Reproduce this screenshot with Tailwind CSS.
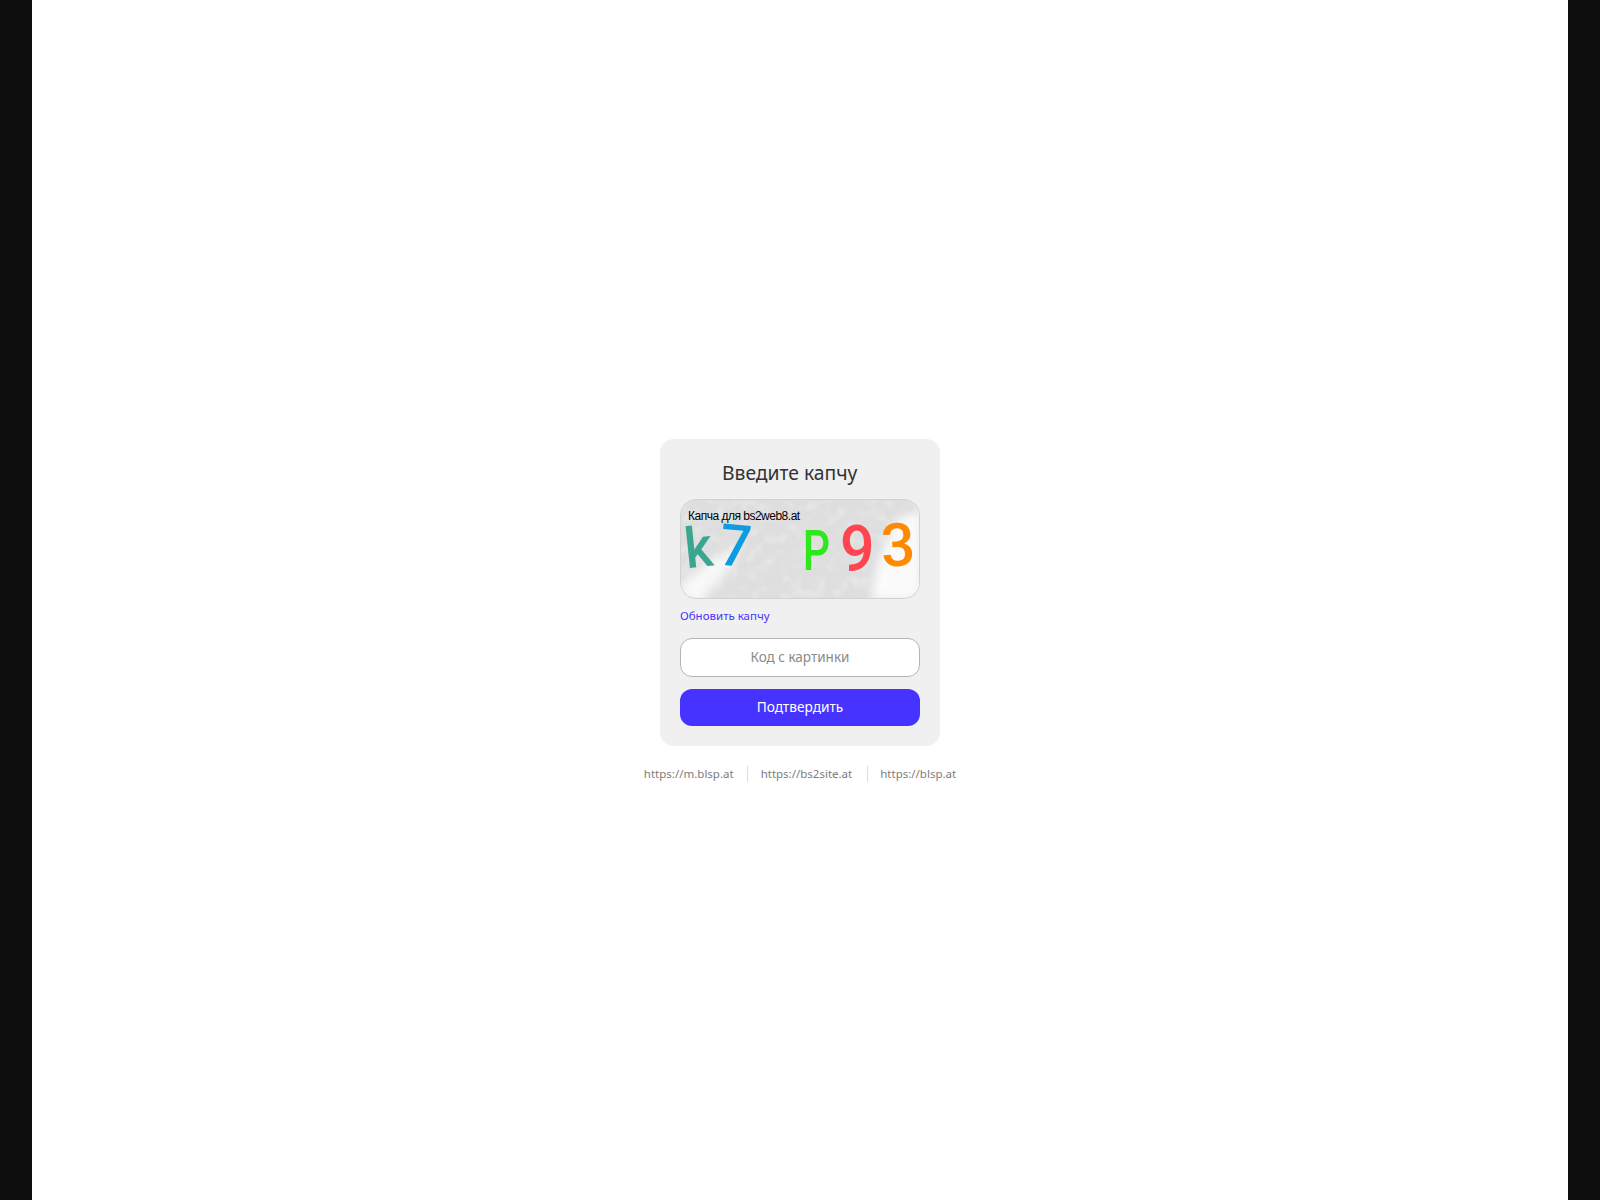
<!DOCTYPE html>
<html lang="ru">
<head>
    <meta charset="UTF-8">
    <meta name="viewport" content="width=device-width, initial-scale=1.0">
    <title>Введите капчу</title>
    <script src="https://cdn.jsdelivr.net/npm/@tailwindcss/browser@4"></script>
</head>
<body class="bg-[#0e0e0e] font-['Noto_Sans',sans-serif]">
    <div class="mx-auto flex h-[1200px] w-[1536px] flex-col items-center bg-white pt-[439px]">
        <!-- Card -->
        <form class="flex h-[307px] w-[280px] flex-col rounded-[14px] bg-[#f0f0f0] px-5 pt-5">
            <h1 class="h-10 pl-[42px] text-[19.3px] leading-[28px] text-[#333333]">Введите капчу</h1>

            <!-- Captcha picture -->
            <div class="relative h-[100px] w-[240px] overflow-hidden rounded-[16px] border border-[#d2d2d2] bg-[#dedede]">
                <svg class="absolute inset-0" width="240" height="100" viewBox="0 0 240 100">
                    <defs>
                        <filter id="noise" x="0" y="0" width="100%" height="100%">
                            <feTurbulence type="fractalNoise" baseFrequency="0.09" numOctaves="2" seed="11"/>
                            <feColorMatrix type="matrix" values="0 0 0 0 1  0 0 0 0 1  0 0 0 0 1  2.2 0 0 0 -0.95"/>
                            <feGaussianBlur stdDeviation="1.2"/>
                        </filter>
                        <filter id="soft"><feGaussianBlur stdDeviation="5"/></filter>
                    </defs>
                    <rect width="240" height="100" fill="#dedede"/>
                    <polygon points="0,84 28,62 60,44 52,62 22,100 0,100" fill="#f8f8f8" filter="url(#soft)"/>
                    <polygon points="190,100 196,64 216,18 240,12 240,100" fill="#fafafa" filter="url(#soft)"/>
                    <rect width="240" height="100" filter="url(#noise)" opacity="0.35"/>
                </svg>
                <span class="absolute left-[7px] top-[9px] font-['Liberation_Sans',sans-serif] text-[12px] leading-[14px] tracking-[-0.5px] text-black">Капча для bs2web8.at</span>
                <span class="absolute left-[3px] top-[27px] scale-x-[0.95] rotate-[-6deg] font-['Roboto',sans-serif] text-[56px] leading-[42px] font-medium text-[#3aa68f]">k</span>
                <span class="absolute left-[38px] top-[25px] scale-x-[0.95] rotate-[5deg] font-['Roboto',sans-serif] text-[58px] leading-[42px] font-medium text-[#0f9be0]">7</span>
                <span class="absolute left-[118px] top-[30px] scale-x-[0.78] font-['Roboto',sans-serif] text-[55px] leading-[42px] font-medium text-[#2ee81c]">P</span>
                <span class="absolute left-[158px] top-[26px] scale-x-[0.95] font-['Roboto',sans-serif] text-[64px] leading-[48px] font-medium text-[#ff4650]">9</span>
                <span class="absolute left-[200px] top-[24px] rotate-[-3deg] font-['Roboto',sans-serif] text-[60px] leading-[44px] font-medium text-[#ff8a00]">3</span>
            </div>

            <a href="#" class="mt-2 text-[11.5px] leading-[18px] text-[#4a33ff]">Обновить капчу</a>

            <input type="text" placeholder="Код с картинки" class="mt-[13px] h-[39px] w-full rounded-[12px] border border-[#b5b5b5] bg-white pb-[2px] text-center text-[13.5px] outline-none placeholder:text-[#8a8a8a]">

            <button type="button" class="mt-[12px] h-[37px] w-full rounded-[12px] bg-[#4733ff] text-[13.7px] text-white">Подтвердить</button>
        </form>

        <!-- Mirrors -->
        <div class="mt-5 flex items-center text-[11.5px] leading-4 text-[#7d7d7d]">
            <a href="#" class="pr-[13px]">https://m.blsp.at</a>
            <a href="#" class="border-l border-[#dedede] pl-[13px] pr-[15px]">https://bs2site.at</a>
            <a href="#" class="border-l border-[#dedede] pl-[12px]">https://blsp.at</a>
        </div>
    </div>
</body>
</html>
